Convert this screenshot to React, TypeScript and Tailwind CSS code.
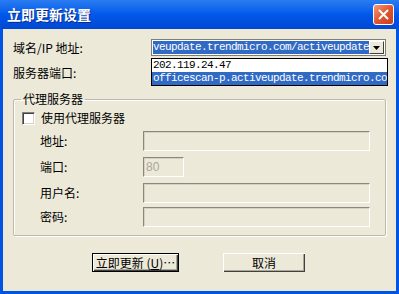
import React from "react";

const cjk = { fontFamily: '"Noto Sans CJK SC", "Noto Sans", sans-serif' };
const mono = { fontFamily: '"Liberation Mono", "DejaVu Sans Mono", monospace' };

function Field({ label, width = "w-[227px]", value }: { label: string; width?: string; value?: string }) {
  return (
    <div className="flex h-[20px] items-center">
      <span className="w-[129px] pl-[26px] text-[12px] text-black">{label}</span>
      <div
        className={`${width} h-[20px] border border-t-[#8b8878] border-l-[#8b8878] border-b-white border-r-white bg-[#ECE9D8] shadow-[inset_1px_1px_0_#d4d0c8] flex items-center pl-[2px]`}
      >
        {value && <span className="text-[12px] leading-none text-[#a9a79a]" style={{ fontFamily: '"Liberation Sans", sans-serif' }}>{value}</span>}
      </div>
    </div>
  );
}

export default function App() {
  return (
    <div className="flex h-[294px] w-[399px] flex-col overflow-hidden bg-[#0054E3] select-none" style={cjk}>
      {/* title bar */}
      <div className="flex h-[29px] items-center justify-between bg-gradient-to-b from-[#2a7cf0] via-[#0058ea] to-[#0148d4] pl-[7px] pr-[5px]">
        <span className="text-[14px] font-bold text-white [text-shadow:1px_1px_0_#0a2a8a]">立即更新设置</span>
        <div className="flex h-[21px] w-[21px] items-center justify-center rounded-[3px] border border-white bg-gradient-to-br from-[#f09a78] via-[#e2552f] to-[#c6401f]">
          <svg width="11" height="11" viewBox="0 0 11 11">
            <path d="M1.5 1.5 L9.5 9.5 M9.5 1.5 L1.5 9.5" stroke="white" strokeWidth="2" strokeLinecap="round" />
          </svg>
        </div>
      </div>

      {/* client area */}
      <div className="mx-[3px] mb-[3px] flex flex-1 flex-col bg-[#ECE9D8] text-black">
        {/* domain row */}
        <div className="mt-[10px] flex h-[17px] items-center">
          <span className="w-[148px] pl-[10px] text-[12px]">域名/IP 地址:</span>
          <div className="relative flex h-[17px] w-[235px] items-center border border-[#7f7d73] bg-white">
            <div className="ml-[1px] flex h-[13px] w-[216px] items-center overflow-hidden bg-[#316AC5]">
              <span className="whitespace-nowrap text-[11px] leading-none tracking-[-0.6px] text-white" style={mono}>
                veupdate.trendmicro.com/activeupdate
              </span>
            </div>
            <div className="ml-auto mr-[1px] flex h-[13px] w-[15px] items-center justify-center border border-b-[#404040] border-r-[#404040] border-t-white border-l-white bg-[#ECE9D8]">
              <svg width="7" height="4" viewBox="0 0 7 4">
                <path d="M0 0 H7 L3.5 4 Z" fill="black" />
              </svg>
            </div>
            {/* dropdown list */}
            <div className="absolute left-[-1px] top-[18px] z-10 w-[237px] border border-black bg-white">
              <div className="flex h-[13px] items-center pl-[1px] text-[11px] leading-none tracking-[-0.6px] text-black" style={mono}>
                202.119.24.47
              </div>
              <div className="flex h-[13px] items-center overflow-hidden whitespace-nowrap bg-[#316AC5] pl-[1px] text-[11px] leading-none tracking-[-0.6px] text-white" style={mono}>
                officescan-p.activeupdate.trendmicro.co
              </div>
            </div>
          </div>
        </div>

        {/* port row */}
        <div className="mt-[8px] flex h-[17px] items-center">
          <span className="pl-[10px] text-[12px]">服务器端口:</span>
        </div>

        {/* proxy group */}
        <fieldset className="mx-[10px] mt-[11px] h-[144px] rounded-[2px] border border-[#bcb9aa] shadow-[1px_1px_0_white,inset_1px_1px_0_white]">
          <legend className="ml-[7px] px-[2px] text-[12px] leading-[14px]">代理服务器</legend>
          <div className="mt-[5px] flex h-[14px] items-center pl-[8px]">
            <div className="h-[13px] w-[13px] border border-t-[#808080] border-l-[#808080] border-b-white border-r-white bg-white shadow-[inset_1px_1px_0_#404040,inset_-1px_-1px_0_#d4d0c8]" />
            <span className="ml-[6px] text-[12px]">使用代理服务器</span>
          </div>
          <div className="mt-[6px] flex flex-col gap-[6px]">
            <Field label="地址:" />
            <Field label="端口:" width="w-[41px]" value="80" />
            <Field label="用户名:" />
            <div className="-mt-[2px]">
              <Field label="密码:" />
            </div>
          </div>
        </fieldset>

        {/* buttons */}
        <div className="mt-[17px] flex gap-[44px] pl-[89px]">
          <button className="flex h-[19px] w-[87px] items-center justify-center border border-black bg-[#ECE9D8] text-[12px] shadow-[inset_1px_1px_0_white,inset_-1px_-1px_0_#404040,inset_-2px_-2px_0_#aca899]">
            立即更新 (<u>U</u>)…
          </button>
          <button className="flex h-[19px] w-[82px] items-center justify-center bg-[#ECE9D8] text-[12px] shadow-[inset_1px_1px_0_white,inset_-1px_-1px_0_#404040,inset_-2px_-2px_0_#aca899]">
            取消
          </button>
        </div>
      </div>
    </div>
  );
}
